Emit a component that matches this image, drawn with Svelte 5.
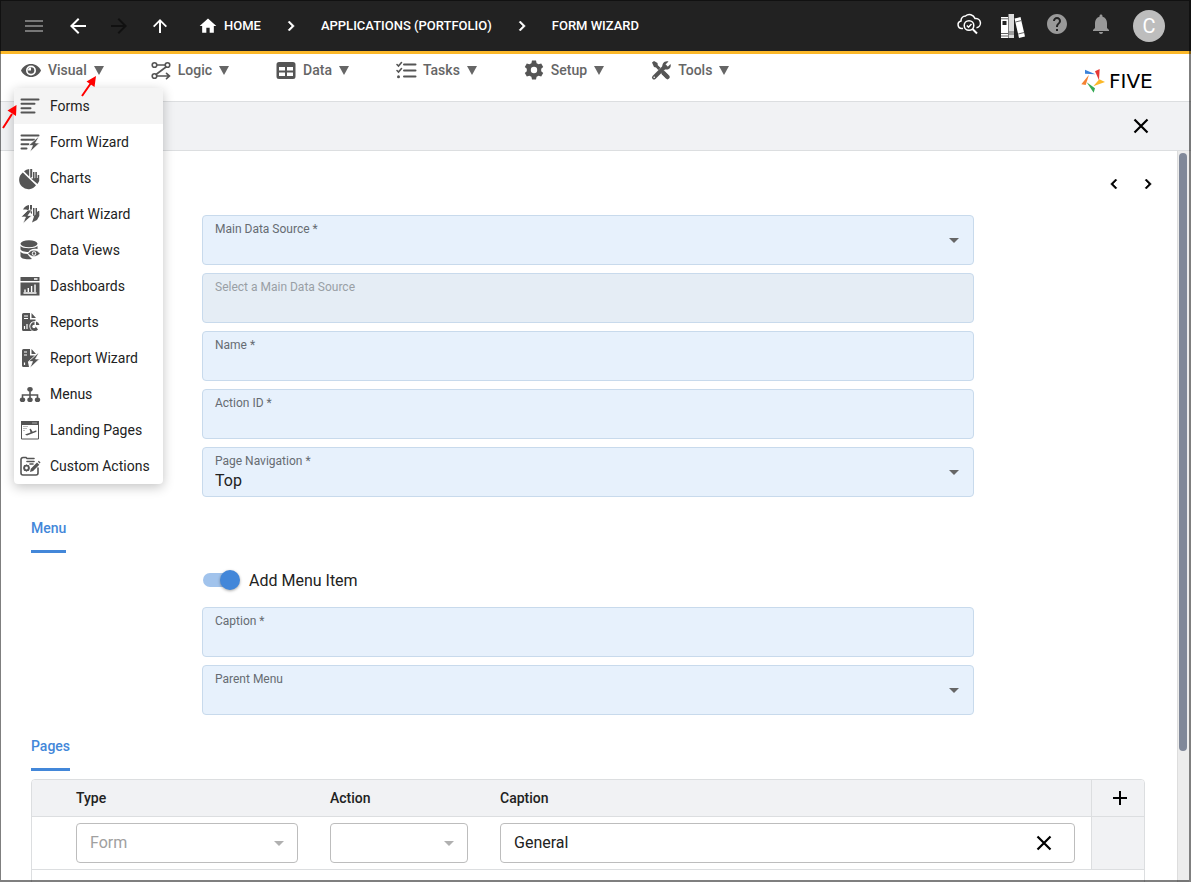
<script>
	let menuOpen = $state(true);
	let addMenuItem = $state(true);
	let pageCaption = $state('General');

	const toolbar = ['Visual', 'Logic', 'Data', 'Tasks', 'Setup', 'Tools'];

	const visualMenu = [
		'Forms',
		'Form Wizard',
		'Charts',
		'Chart Wizard',
		'Data Views',
		'Dashboards',
		'Reports',
		'Report Wizard',
		'Menus',
		'Landing Pages',
		'Custom Actions'
	];

	const mainFields = [
		{ id: 'source', label: 'Main Data Source *', select: true, value: '' },
		{ id: 'picked', label: 'Select a Main Data Source', disabled: true },
		{ id: 'name', label: 'Name *' },
		{ id: 'action-id', label: 'Action ID *' },
		{ id: 'navigation', label: 'Page Navigation *', select: true, value: 'Top' }
	];

	const menuFields = [
		{ id: 'caption', label: 'Caption *' },
		{ id: 'parent', label: 'Parent Menu', select: true, value: '' }
	];

	function toggleMenu(name) {
		if (name === 'Visual') menuOpen = !menuOpen;
	}
</script>

{#snippet bolt()}
	<path d="M17.500 5.500 8.500 13.500h4L10 20l9.500-9h-4l3-5.500z" fill="#555" stroke="#fff" stroke-width=".7" />
{/snippet}

{#snippet icon(name)}
	<svg class="icon" viewBox="0 0 20 20" aria-hidden="true">
		{#if name === 'Visual'}
			<path d="M0 10.500C2 6.500 5.500 4 10 4s8 2.500 10 6.500C18 14.500 14.500 17 10 17S2 14.500 0 10.500z" />
			<circle cx="10" cy="10.500" r="5" fill="#fff" />
			<circle cx="10" cy="10.500" r="3.300" />
			<path d="M10 10.500V7.500a3 3 0 0 0-3 3z" fill="#fff" />
		{:else if name === 'Logic'}
			<g class="line">
				<circle cx="3.500" cy="5" r="2.300" /><circle cx="16.500" cy="5" r="2.300" />
				<circle cx="3.500" cy="16" r="2.300" />
				<path d="M6 5h8M15 7 5 14.500M6 16h12M15.500 13.300 18.500 16l-3 2.700" />
			</g>
		{:else if name === 'Data'}
			<path d="M3 2h14a2.500 2.500 0 0 1 2.500 2.500v12A2.500 2.500 0 0 1 17 19H3a2.500 2.500 0 0 1-2.500-2.500v-12A2.500 2.500 0 0 1 3 2z" />
			<path d="M3 7h6v3.500H3zM11 7h6v3.500h-6zM3 12.500h6V16H3zM11 12.500h6V16h-6z" fill="#fff" />
		{:else if name === 'Tasks'}
			<path class="line heavy" d="M8 4.500h11.500M8 10.500h11.500M8 16.500h11.500" />
			<path class="line" d="M1 4.500l1.500 1.500 3-3.500M1 10.500 2.500 12l3-3.500" />
			<circle cx="2.500" cy="16.700" r="1.500" />
		{:else if name === 'Setup'}
			<path
				fill-rule="evenodd"
				d="M8 .5h4l.6 2.700 2 1.100L17.200 3.500l2 3.400-2 1.900v2.400l2 1.900-2 3.400-2.600-.8-2 1.100-.6 2.700H8l-.6-2.700-2-1.100-2.600.8-2-3.400 2-1.900V8.800l-2-1.900 2-3.400 2.600.8 2-1.100zM10 6.800a3.200 3.200 0 1 0 0 6.400 3.200 3.200 0 0 0 0-6.400z"
			/>
		{:else if name === 'Tools'}
			<path d="M1 2.500 3 1l3.500 2 .3 2.300 10.700 10-2.500 3L9 12 5 7.500 3 7z" />
			<path d="M3 18.500 13 8.500" stroke="#fff" stroke-width="6" />
			<path d="M3 17.500 14 6.500" stroke="#555" stroke-width="4" stroke-linecap="round" />
			<path d="M17.500 1.500 14.500 4.500l1 1.500 1.500.5 2.500-2.500c1 3-1 6-4.500 5.500C11.500 9 10.500 6 12 3.500c1.200-2 3.500-2.800 5.500-2z" />
			<path d="m12.500 13 4 4" stroke="#555" stroke-width="4.500" stroke-linecap="round" />
			<circle cx="3.200" cy="17.300" r=".8" fill="#fff" />
		{:else if name === 'Forms'}
			<path class="line heavy" d="M1.500 3.500h17M1.500 7.800h13M1.500 12.200h9M1.500 16.600h13" />
		{:else if name === 'Form Wizard'}
			<path class="line heavy" d="M1.500 3.500h17M1.500 7.800h13M1.500 12.200h7M1.500 16.600h5" />
			{@render bolt()}
		{:else if name === 'Charts'}
			<path d="M2.800 4.500 9 10.500l7 6.800A9.300 9.300 0 1 1 2.800 4.500z" />
			<path d="M4 3.200A9 9 0 0 1 9.200 1v7.500zM10.200 1h2v8l-2 1zM13 4h1.500v9L13 11.500zM15.300 4h1.600v8.500h-1.600zM17.700 7h1.500v6l-1.700 3-6.500-5.500 6.700-.5z" />
		{:else if name === 'Chart Wizard'}
			<path d="M3 5.500A9 9 0 0 1 9 1v7L6.500 5.500zM10 1h2v9l-2-1.500zM13 4h1.500v9L13 11.500zM15.500 4h1.500v8.500h-1.500zM18 7h1.300v5L17 16l-5 2.500 2-6z" />
			<path d="M8 6 1 13h4.500l-2.500 6.500L12 11.500H8L12 6z" stroke="#fff" stroke-width=".7" />
		{:else if name === 'Data Views'}
			<ellipse cx="9" cy="3.800" rx="8.500" ry="3.500" />
			<path d="M.5 6C2.500 9 15 9 17.500 6V9c-5-1-8 1-9 3-4 0-8-1-8-3zM.5 11.500c1 1.800 4 2.500 7 2.500L9 16l3 3C6 20 .5 18.500.5 16z" />
			<path d="M8 13.500c3-4.500 9-4.500 12 0-3 4-9 4-12 0z" stroke="#fff" stroke-width=".6" />
			<circle cx="14" cy="13.500" r="2.200" fill="#fff" /><circle cx="14" cy="13.500" r="1.300" />
		{:else if name === 'Dashboards'}
			<path d="M.5 1h19v4H.5zM.5 6.500h19V19.500H.5z" />
			<path d="M3.500 17h13M5 16v-2.500M8.300 16v-4M11.600 16V10M15 16V8.500M14 3h3.500" stroke="#fff" stroke-width="1.400" />
		{:else if name === 'Reports'}
			<path d="M3.500 1H10v6.500h5.500V9c-4.500 0-6.500 3-6 6 .3 2 1.500 3.500 3 4h-9A1.500 1.500 0 0 1 2 17.500v-15A1.500 1.500 0 0 1 3.500 1zM11.500 1 16 6h-4.500z" />
			<path d="M4 4h4M4 6.500h4M4.500 17v-3M7 17v-5" stroke="#fff" stroke-width="1.200" />
			<path d="M14.500 10v4.500h1.200L18 17.500a4.500 4.500 0 1 1-3.500-7.500zM16 9.500a4.500 4.500 0 0 1 3.500 3.500H16z" />
			<circle cx="14" cy="14.500" r="1.700" fill="#fff" />
		{:else if name === 'Report Wizard'}
			<path d="M3.500 1H10v6.500h5L8 14l1 5H3.500A1.500 1.500 0 0 1 2 17.500v-15A1.500 1.500 0 0 1 3.500 1zM11.500 1 16 6h-4.500z" />
			<path d="M4 4h3M4 7h3M4.500 17v-2.500" stroke="#fff" stroke-width="1.200" />
			{@render bolt()}
		{:else if name === 'Menus'}
			<ellipse cx="10" cy="5.200" rx="2.700" ry="2.300" />
			<path class="line" d="M10 7v8M2.500 15v-4h15v4" />
			<ellipse cx="2.500" cy="15.700" rx="2.700" ry="2.300" /><ellipse cx="10" cy="15.700" rx="2.700" ry="2.300" /><ellipse cx="17.500" cy="15.700" rx="2.700" ry="2.300" />
		{:else if name === 'Landing Pages'}
			<path d="M1.500 1.500h17v17.500h-17z" fill="none" stroke="#555" />
			<path d="M1 1h18v4H1zM5 14.500l5.500-2-1-3.500 1.200-.3 2 3 3-1.200c1.200-.2 1.200 1 .3 1.400L7 15.500z" />
			<path d="M3 6.500h5M3 8.500h4M3 10.500h2" stroke="#bbb" />
			<path d="M12 3h5" stroke="#aaa" />
		{:else}
			<path class="line" d="M14 2.500H7L6 1.500H3A2 2 0 0 0 1 3.500V17a2 2 0 0 0 2 2h13a2 2 0 0 0 2-2v-5M7 5.500h7M10 8h3" />
			<circle cx="6.500" cy="12" r="2.300" fill="none" stroke="#555" stroke-width="1.800" />
			<path d="M6.500 8.500v7M3 12h7M4 9.500l5 5M9 9.500l-5 5" stroke="#555" stroke-width="1.200" />
			<circle cx="6.500" cy="12" r="1.400" fill="#fff" />
			<path d="m10 16 .8-3.200L17 6.500l2.300 2.200-6.200 6.300zM17.800 5.700l1-.9 1.700 1.700-.7 1.100z" />
		{/if}
	</svg>
{/snippet}

{#snippet chevron()}
	<svg class="icon" viewBox="0 0 24 24" aria-hidden="true">
		<path d="M10 6 8.590 7.410 13.170 12l-4.580 4.590L10 18l6-6z" />
	</svg>
{/snippet}

{#snippet cross()}
	<svg class="icon big" viewBox="0 0 24 24" aria-hidden="true">
		<path d="m5.500 5.500 13 13M18.500 5.500l-13 13" stroke="currentColor" stroke-width="2.200" />
	</svg>
{/snippet}

{#snippet field(f)}
	<div class="field" class:disabled={f.disabled}>
		<label for={f.id}>{f.label}</label>
		{#if f.select}
			<select id={f.id}>
				<option>{f.value}</option>
			</select>
			<span class="caret"></span>
		{:else}
			<input id={f.id} type="text" disabled={f.disabled} />
		{/if}
	</div>
{/snippet}

<div class="app">
	<header>
		<button class="dim" aria-label="Menu">
			<svg class="icon big" viewBox="0 0 24 24"><path d="M3 6h18v2H3zM3 11h18v2H3zM3 16h18v2H3z" /></svg>
		</button>
		<div class="history">
			<button aria-label="Back">
				<svg class="icon big" viewBox="0 0 24 24"><path d="M20 11H7.830l5.590-5.590L12 4l-8 8 8 8 1.410-1.410L7.830 13H20z" /></svg>
			</button>
			<button class="off" aria-label="Forward" disabled>
				<svg class="icon big" viewBox="0 0 24 24"><path d="m12 4-1.410 1.410L16.170 11H4v2h12.170l-5.580 5.590L12 20l8-8z" /></svg>
			</button>
			<button aria-label="Up">
				<svg class="icon big" viewBox="0 0 24 24"><path d="m5 12 1.300 1.300L11 8.500V19h2V8.500l4.700 4.800L19 12l-7-7z" /></svg>
			</button>
		</div>
		<nav class="crumbs" aria-label="Breadcrumb">
			<a href="#home">
				<svg class="icon" viewBox="0 0 24 24" aria-hidden="true"><path d="M10 20v-6h4v6h5v-8h3L12 3 2 12h3v8z" /></svg>
				HOME
			</a>
			{@render chevron()}
			<a href="#applications">APPLICATIONS (PORTFOLIO)</a>
			{@render chevron()}
			<a href="#wizard">FORM WIZARD</a>
		</nav>
		<div class="actions">
			<button aria-label="Inspect">
				<svg class="icon big" viewBox="0 0 24 24">
					<g fill="none" stroke="#fff" stroke-width="1.500">
						<path d="M6 16.500H5A3.800 3.800 0 0 1 4 9 4.800 4.800 0 0 1 8.500 4 6 6 0 0 1 18 6.500a4.500 4.500 0 0 1 1.500 9.300" />
						<circle cx="12" cy="13.500" r="4.800" />
						<path d="m15.500 17 4.500 4.500" stroke-width="2" /><path d="m9.800 13.500 1.700 1.700 3-3.200" />
					</g>
				</svg>
			</button>
			<button aria-label="Library">
				<svg class="icon big" viewBox="0 -2 24 24">
					<path d="M0 3h7v21H0z" /><path d="M7.500 0h5.500v24H7.500z" fill="#ddd" /><path d="m13.500 4.500 6-1.500L24 22.500l-6 1.500z" />
					<path d="M1.500 7h4v4h-4z" fill="#222" />
					<path d="M0 4.800h7M0 19.500h7M0 22h7M7.500 18h5.500M7.500 20h5.500M14.500 8l6-1.500M17.200 20l6-1.500" stroke="#555" stroke-width=".9" />
				</svg>
			</button>
			<button class="soft" aria-label="Help">
				<svg class="icon big" viewBox="0 0 24 24"><path d="M12 2C6.480 2 2 6.480 2 12s4.480 10 10 10 10-4.480 10-10S17.520 2 12 2zm1 17h-2v-2h2v2zm2.070-7.750-.9.920C13.450 12.900 13 13.500 13 15h-2v-.5c0-1.100.45-2.100 1.170-2.830l1.240-1.260c.37-.36.59-.86.59-1.410 0-1.100-.9-2-2-2s-2 .9-2 2H8c0-2.210 1.790-4 4-4s4 1.790 4 4c0 .88-.36 1.680-.93 2.250z" /></svg>
			</button>
			<button class="soft" aria-label="Notifications">
				<svg class="icon big" viewBox="0 0 24 24"><path d="M12 22c1.100 0 2-.9 2-2h-4c0 1.100.89 2 2 2zm6-6v-5c0-3.070-1.640-5.640-4.500-6.320V4c0-.83-.67-1.500-1.500-1.500s-1.500.67-1.500 1.500v.68C7.630 5.360 6 7.920 6 11v5l-2 2v1h16v-1z" /></svg>
			</button>
		</div>
		<button class="avatar" aria-label="Account">C</button>
	</header>

	<div class="toolbar">
		{#each toolbar as name}
			<button class="tool" onclick={() => toggleMenu(name)}>
				{@render icon(name)}
				<span>{name}</span>
				<span class="triangle"></span>
			</button>
		{/each}
		<div class="logo">
			<svg viewBox="0 0 72 72" aria-hidden="true">
				<path d="M12 2v12l31 2z" fill="#3b82d9" />
				<path d="M56 0 42 7l12 27z" fill="#e53935" />
				<path d="m55 31 17 8-35 13z" fill="#fbb829" />
				<path d="m17 40 25 18-4 13z" fill="#34a853" />
				<path d="M24 17 1 46l13 2z" fill="#f58232" />
			</svg>
			<span>FIVE</span>
		</div>

		{#if menuOpen}
			<ul class="menu">
				{#each visualMenu as name, i}
					<li>
						<button class:active={i === 0}>
							{@render icon(name)}
							{name}
						</button>
					</li>
				{/each}
			</ul>
		{/if}

		<svg class="pointers" viewBox="0 0 110 60" aria-hidden="true">
			<path d="M82 24 91 11M3 56l9-14" stroke="#f00" stroke-width="2" />
			<path d="M96 4 86.500 9.500l8 5.500zM16.500 33 7.500 38.500l8.500 5.500z" fill="#f00" />
		</svg>
	</div>

	<div class="titlebar">
		<button aria-label="Close">{@render cross()}</button>
	</div>

	<div class="body">
		<main>
			<div class="pager">
				<button class="previous" aria-label="Previous">{@render chevron()}</button>
				<button aria-label="Next">{@render chevron()}</button>
			</div>

			<div class="content">
				<div class="fields">
					{#each mainFields as f}
						{@render field(f)}
					{/each}
				</div>

				<h2>Menu</h2>
				<div class="fields">
					<label class="switch">
						<input type="checkbox" bind:checked={addMenuItem} />
						Add Menu Item
					</label>
					{#each menuFields as f}
						{@render field(f)}
					{/each}
				</div>

				<h2>Pages</h2>
				<div class="grid">
					<table>
						<colgroup>
							<col class="c-handle" /><col class="c-type" /><col class="c-action" /><col /><col class="c-add" />
						</colgroup>
						<thead>
							<tr>
								<th></th>
								<th>Type</th>
								<th>Action</th>
								<th>Caption</th>
								<th class="add">
									<button aria-label="Add page">
										<svg class="icon big" viewBox="0 0 24 24"><path d="M11 5h2v6h6v2h-6v6h-2v-6H5v-2h6z" /></svg>
									</button>
								</th>
							</tr>
						</thead>
						<tbody>
							<tr>
								<td></td>
								<td>
									<div class="box">
										<select disabled aria-label="Type"><option>Form</option></select>
										<span class="caret"></span>
									</div>
								</td>
								<td>
									<div class="box">
										<select disabled aria-label="Action"><option></option></select>
										<span class="caret"></span>
									</div>
								</td>
								<td>
									<div class="box">
										<input type="text" aria-label="Caption" bind:value={pageCaption} />
										<button aria-label="Clear caption" onclick={() => (pageCaption = '')}>{@render cross()}</button>
									</div>
								</td>
								<td class="add"></td>
							</tr>
						</tbody>
					</table>
				</div>
			</div>
		</main>
		<div class="track" aria-hidden="true"><div class="thumb"></div></div>
	</div>
</div>

<style>
	:global(body) {
		background: #fff;
		color: #222;
		font-family: Roboto, 'Liberation Sans', sans-serif;
	}

	.app {
		position: relative;
		display: flex;
		flex-direction: column;
		height: 100vh;
		overflow: hidden;
	}

	/* thin window frame drawn over everything */
	.app::after {
		content: '';
		position: absolute;
		inset: 0;
		border: solid rgba(0, 0, 0, 0.5);
		border-width: 1px 2px 2px 1px;
		pointer-events: none;
	}

	button {
		display: flex;
		align-items: center;
		padding: 0;
		border: 0;
		background: none;
		color: inherit;
		font: inherit;
		cursor: pointer;
	}

	input,
	select {
		box-sizing: border-box;
		width: 100%;
		margin: 0;
		padding: 0;
		border: 0;
		outline: 0;
		background: none;
		color: #222;
		font: 16px / 20px Roboto, 'Liberation Sans', sans-serif;
		appearance: none;
	}

	.icon {
		flex: none;
		display: block;
		width: 20px;
		height: 20px;
		fill: currentColor;
		overflow: visible;
	}

	.icon.big {
		width: 24px;
		height: 24px;
	}

	.line {
		fill: none;
		stroke: currentColor;
		stroke-width: 1.6;
		stroke-linecap: round;
	}

	.heavy {
		stroke-width: 2;
	}

	header {
		display: flex;
		flex: none;
		align-items: center;
		height: 51px;
		padding: 0 26px 0 22px;
		border-bottom: 3px solid #fbb829;
		background: #222;
		color: #fff;
	}

	.history {
		display: flex;
		gap: 17px;
		margin: 0 26px 0 20px;
	}

	.dim {
		color: #777;
	}
	.off {
		color: #111;
	}
	.soft {
		color: #999;
	}

	.crumbs {
		display: flex;
		align-items: center;
		gap: 20px;
		font-size: 13px;
		font-weight: 500;
		line-height: 20px;
		white-space: nowrap;
	}

	.crumbs a {
		display: flex;
		gap: 6px;
		color: #fff;
		text-decoration: none;
	}

	.actions {
		display: flex;
		gap: 20px;
		margin: 0 20px 4px auto;
	}

	.avatar {
		justify-content: center;
		width: 32px;
		height: 32px;
		border-radius: 50%;
		background: #bdbdbd;
		font-size: 20px;
	}

	.toolbar {
		position: relative;
		display: flex;
		flex: none;
		align-items: flex-start;
		gap: 47px;
		height: 47px;
		padding: 0 21px;
		border-bottom: 1px solid #dcdee0;
	}

	.tool {
		gap: 7px;
		height: 32px;
		color: #555;
		font-size: 14px;
		font-weight: 500;
	}

	.tool span {
		color: #666;
	}

	.triangle {
		border: solid transparent;
		border-width: 9px 5px 0;
		border-top-color: #666;
	}

	.logo {
		display: flex;
		align-items: center;
		align-self: flex-end;
		gap: 4px;
		width: 89px;
		height: 40px;
		margin-left: auto;
		color: #000;
		font: 20px / 24px 'DejaVu Sans', sans-serif;
	}

	.logo svg {
		width: 24px;
		height: 24px;
	}

	.menu {
		position: absolute;
		top: 34px;
		left: 14px;
		z-index: 2;
		width: 149px;
		margin: 0;
		padding: 0;
		border-radius: 4px;
		background: #fff;
		box-shadow: 0 3px 12px rgba(0, 0, 0, 0.24);
		list-style: none;
		overflow: hidden;
	}

	.menu button {
		gap: 10px;
		width: 100%;
		height: 36px;
		padding: 0 6px;
		font-size: 14px;
		white-space: nowrap;
	}

	.menu .icon {
		color: #555;
	}

	.menu .active {
		background: #f4f4f4;
	}

	.pointers {
		position: absolute;
		top: 18px;
		left: 0;
		z-index: 3;
		width: 110px;
		height: 60px;
		pointer-events: none;
	}

	.titlebar {
		display: flex;
		flex: none;
		justify-content: flex-end;
		height: 48px;
		padding: 0 38px;
		border-bottom: 1px solid #dcdee0;
		background: #f1f2f4;
		color: #000;
	}

	.body {
		display: flex;
		flex: 1;
		min-height: 0;
		padding-right: 2px;
	}

	main {
		flex: 1;
		min-width: 0;
		overflow-y: auto;
		scrollbar-width: none;
	}

	.track {
		box-sizing: border-box;
		width: 12px;
		padding: 2px 2px 0 1px;
		border-left: 1px solid #ddd;
		background: #ececec;
	}

	.thumb {
		height: 82%;
		border-radius: 4px;
		background: #808899;
	}

	.pager {
		display: flex;
		justify-content: flex-end;
		gap: 14px;
		padding: 23px 19px 21px;
		color: #000;
	}

	.pager .icon,
	.crumbs > .icon {
		stroke: currentColor;
		stroke-width: 0.6;
	}

	.previous {
		transform: rotate(180deg);
	}

	.content {
		padding: 0 32px 0 31px;
	}

	.fields {
		display: flex;
		flex-direction: column;
		gap: 8px;
		padding: 0 171px;
	}

	.field {
		position: relative;
		box-sizing: border-box;
		height: 50px;
		padding: 5px 12px;
		border: 1px solid #c8daec;
		border-radius: 4px;
		background: #e7f1fc;
	}

	.field label {
		display: block;
		color: #666c72;
		font-size: 12px;
		line-height: 16px;
	}

	.field input,
	.field select {
		display: block;
		height: 24px;
	}

	.field.disabled {
		background: #e5edf5;
	}

	.field.disabled label {
		color: #999fa5;
	}

	.caret {
		position: absolute;
		top: 50%;
		right: 14px;
		margin-top: -2px;
		border: solid transparent;
		border-width: 5px 5px 0;
		border-top-color: #666;
		pointer-events: none;
	}

	h2 {
		width: fit-content;
		margin: 0;
		padding: 21px 0 12px;
		border-bottom: 3px solid #4387d9;
		color: #4387d9;
		font-size: 14px;
		font-weight: 500;
		line-height: 20px;
	}

	.switch {
		display: flex;
		align-items: center;
		gap: 10px;
		height: 38px;
		margin-top: 8px;
		font-size: 16px;
	}

	.switch input {
		position: relative;
		width: 36px;
		height: 14px;
		margin-left: 1px;
		border-radius: 7px;
		background: #c4c4c4;
	}

	.switch input::before {
		content: '';
		position: absolute;
		top: -3px;
		left: 0;
		width: 20px;
		height: 20px;
		border-radius: 50%;
		background: #fafafa;
		box-shadow: 0 1px 3px rgba(0, 0, 0, 0.35);
	}

	.switch input:checked {
		background: #a1c3ec;
	}

	.switch input:checked::before {
		left: 17px;
		background: #4387d9;
	}

	.grid {
		min-height: 160px;
		margin-top: 8px;
		border: 1px solid #dcdee0;
		border-radius: 4px;
		overflow: hidden;
	}

	table {
		width: 100%;
		border-spacing: 0;
		table-layout: fixed;
	}

	.c-handle {
		width: 28px;
	}
	.c-type {
		width: 254px;
	}
	.c-action {
		width: 170px;
	}
	.c-add {
		width: 53px;
	}

	th,
	td {
		padding: 6px 16px;
		border-bottom: 1px solid #dcdee0;
	}

	th {
		height: 24px;
		background: #f1f2f4;
		font-size: 14px;
		font-weight: 500;
		line-height: 20px;
		text-align: left;
	}

	th:first-child,
	td:first-child {
		padding: 0;
	}

	.add {
		padding: 0;
		border-left: 1px solid #dcdee0;
		background: #f1f2f4;
	}

	.add button {
		margin: 0 auto;
		padding-left: 3px;
		color: #000;
	}

	.box {
		position: relative;
		display: flex;
		align-items: center;
		box-sizing: border-box;
		height: 40px;
		padding: 0 18px 0 13px;
		border: 1px solid #bdbdbd;
		border-radius: 4px;
	}

	.box button {
		color: #000;
	}

	.box select {
		color: #a0a0a0;
		opacity: 1;
	}

	.box .caret {
		right: 13px;
		border-top-color: #b0b0b0;
	}
</style>
